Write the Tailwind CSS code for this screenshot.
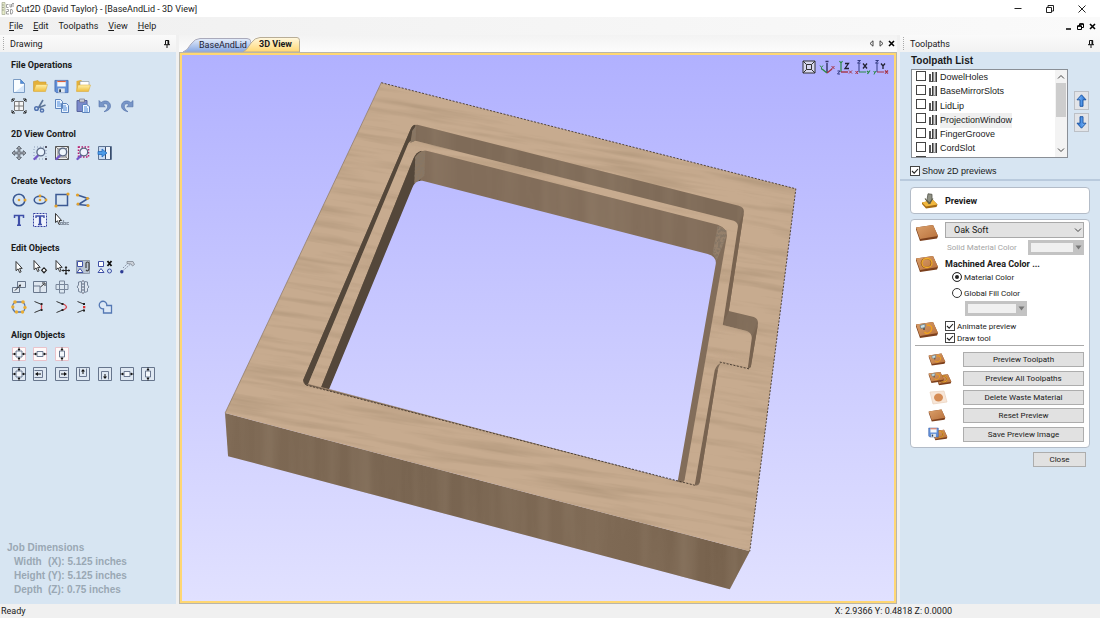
<!DOCTYPE html>
<html lang="en">
<head>
    <meta charset="UTF-8">
    <meta name="viewport" content="width=device-width, initial-scale=1.0">
    <title>Cut2D {David Taylor} - [BaseAndLid - 3D View]</title>
    <script src="https://cdn.jsdelivr.net/npm/@tailwindcss/browser@4"></script>
</head>
<body class="h-screen flex flex-col overflow-hidden bg-[#f0f0f0] text-[#1a1a1a] text-[9px] leading-[12px] [font-family:Roboto,sans-serif]">

    <!-- Shared icon shapes -->
    <svg class="absolute w-0 h-0">
        <defs>
            <linearGradient id="gFolder" x1="0" y1="0" x2="0" y2="1"><stop offset="0" stop-color="#fff0a8"/><stop offset="1" stop-color="#eebc3c"/></linearGradient>
            <linearGradient id="gArrow" x1="0" y1="0" x2="1" y2="0"><stop offset="0" stop-color="#8cc4ff"/><stop offset="1" stop-color="#1d6ad0"/></linearGradient>
            <linearGradient id="gWood" x1="0" y1="0" x2="1" y2="1"><stop offset="0" stop-color="#dba06b"/><stop offset="1" stop-color="#b8713c"/></linearGradient>
            <symbol id="pin" viewBox="0 0 8 8"><path d="M2.5 .5h3.2v4M2.5 .5v4M1 4.7h6M4 5v3" fill="none" stroke="#111"/><path d="M4.5 .5h1.5v4H4.5z" fill="#111"/></symbol>
            <symbol id="lens" viewBox="0 0 16 16"><path d="M6.500 10 2.500 14" stroke="#7457c8" stroke-width="2.4" stroke-linecap="round"/><circle cx="8.8" cy="7" r="3.9" fill="#eef6ff" fill-opacity=".8" stroke="#596783" stroke-width="1.3"/></symbol>
            <symbol id="cursor" viewBox="0 0 16 16"><path d="M5 2.500v9.200l2.100-1.800 1.500 3.600 1.500-.7-1.500-3.400h2.600z" fill="#fff" stroke="#222" stroke-width=".9"/></symbol>
            <symbol id="undo" viewBox="0 0 16 16"><path d="M2 2.500v6.300h6.300L6 6.700c2-1.600 4.600-1 4.700 1.500.1 2-1.200 3.700-3.700 5.500 4-.7 6.700-2.900 6.500-6C13.300 3 7.500 1.400 4.100 4.600z" fill="#7896c8" stroke="#4d6ca5" stroke-width=".6"/></symbol>
            <symbol id="slab" viewBox="0 0 24 18"><path d="M1 3.500 18 1l5 11-1 2.500L5 17 1 5.500z" fill="#7b3f1c"/><path d="M1 3.500 18 1l5 11L5 15z" fill="url(#gWood)"/></symbol>
            <symbol id="ringslab" viewBox="0 0 24 18"><use href="#slab"/><ellipse cx="11.500" cy="8" rx="5" ry="4.500" fill="none" stroke="#8a5018" stroke-width="1.600"/><ellipse cx="12" cy="8" rx="5" ry="4.500" fill="none" stroke="#f0ac2b" stroke-width="1.300"/></symbol>
            <symbol id="toolslab" viewBox="0 0 24 18"><use href="#slab"/><path d="M12 4c4 0 5.500 2 4.500 5s-5 4.500-7 2" fill="none" stroke="#f0a31c" stroke-width="1.300"/><path d="M9 9V5" stroke="#555" stroke-width="1.600"/><path d="M5 4.500l5-1.500v3.500l-4 1z" fill="#cfe0e4" stroke="#587682" stroke-width=".7"/></symbol>
            <symbol id="floppy" viewBox="0 0 16 16"><path d="M1 1.500h14v13H2.500L1 13z" fill="#6290d8" stroke="#3c62a8" stroke-width=".8"/><path d="M3.500 2h9v6h-9z" fill="#f4f8fc"/><path d="M3.500 2h9v1.300h-9z" fill="#e0623c"/><path d="M4.500 10h7v4.500h-7z" fill="#dfe6ee"/><path d="M5.500 11h2v3h-2z" fill="#345"/></symbol>
            <symbol id="bit" viewBox="0 0 8 11"><path d="M0 2h2v7h1v1H0z" fill="#555"/><path d="M3 0h5v10H3z" fill="#8a8a8a"/><path d="M3 0h1v10H3zM7 0h1v10H7z" fill="#3c3c3c"/><path d="M5 0h1v9H5z" fill="#d8d8d8"/></symbol>
            <symbol id="chev" viewBox="0 0 8 6"><path d="M1 1.500 4 4.500l3-3" fill="none" stroke="#444"/></symbol>
            <symbol id="tick" viewBox="0 0 10 10"><path d="M2 5l2.200 2.200L8 3" fill="none" stroke="#222" stroke-width="1.100"/></symbol>
            <symbol id="frame" viewBox="0 0 16 16"><path d="M1.500 1.500h13v13h-13z" fill="#dfe8f2" stroke="#66758c"/></symbol>
            <symbol id="pinkframe" viewBox="0 0 16 16"><path d="M1.500 1.500h13v13h-13z" fill="#fffafa" stroke="#e9c3cb"/></symbol>
            <symbol id="alBoth" viewBox="0 0 16 16"><path d="M5 5h6v6H5z" fill="#f3f7fb" stroke="#6b7890"/><path d="M8 1.500v3M8 11.500v3M1.500 8h3M11.500 8h3" stroke="#111"/><path d="M6.500 3h3L8 4.800zM6.500 13h3L8 11.200zM3 6.500v3L4.800 8zM13 6.500v3L11.200 8z" fill="#111"/></symbol>
            <symbol id="alH" viewBox="0 0 16 16"><path d="M5 5.500h6v5H5z" fill="#f3f7fb" stroke="#6b7890"/><path d="M1.500 8h3M11.500 8h3" stroke="#111"/><path d="M3 6.500v3L4.800 8zM13 6.500v3L11.200 8z" fill="#111"/></symbol>
            <symbol id="alV" viewBox="0 0 16 16"><path d="M5.500 5h5v6h-5z" fill="#f3f7fb" stroke="#6b7890"/><path d="M8 1.500v3M8 11.500v3" stroke="#111"/><path d="M6.500 3h3L8 4.800zM6.500 13h3L8 11.200z" fill="#111"/></symbol>
        </defs>
    </svg>

    <!-- Title bar -->
    <header class="h-[17px] shrink-0 flex items-center bg-white pl-px pr-[14px]">
        <svg class="size-[13px]" viewBox="0 0 13 13"><path d="M1 .5h3v12H1z" fill="#e6ebc9" stroke="#a5ab91" stroke-width=".7"/><path d="M1 3h2M1 5.500h2M1 8h2" stroke="#777" stroke-width=".6"/><path d="M7.500 2.500h-2v3h2M9 2v3h1.500V2M11 1.500h2M12 1.500V5M5.500 7.500h2v2h-2v2.500h2.500M9.500 7.500h1.500q1.500 2-.1 4.500H9.500z" fill="none" stroke="#8a8a8a" stroke-width=".8"/></svg>
        <h1 class="ml-0.5">Cut2D {David Taylor} - [BaseAndLid - 3D View]</h1>
        <div class="ml-auto flex items-center gap-6">
            <button aria-label="Minimize"><svg class="size-[8px]" viewBox="0 0 8 8"><path d="M.5 3.500h7" stroke="#222"/></svg></button>
            <button aria-label="Restore"><svg class="size-[8px]" viewBox="0 0 8 8"><path d="M.5 2.500h5v5h-5zM2 2.500v-2h5.500V6H6" fill="none" stroke="#222"/></svg></button>
            <button aria-label="Close window"><svg class="size-[8px]" viewBox="0 0 8 8"><path d="M.5.5l7 7M7.500.5l-7 7" stroke="#222"/></svg></button>
        </div>
    </header>

    <!-- Menu bar -->
    <nav class="h-[18px] shrink-0 flex items-center bg-linear-to-r from-[#f0f0f0] to-[#fafafa] pl-[9px] pr-1">
        <div class="flex gap-2.5">
            <button><u>F</u>ile</button>
            <button><u>E</u>dit</button>
            <button>Toolpaths</button>
            <button><u>V</u>iew</button>
            <button><u>H</u>elp</button>
        </div>
        <div class="ml-auto flex items-center gap-[5px]">
            <button aria-label="Minimize view"><svg class="size-[7px]" viewBox="0 0 7 7"><path d="M1 6h5" stroke="#000" stroke-width="1.500"/></svg></button>
            <button aria-label="Restore view"><svg class="size-[7px]" viewBox="0 0 7 7"><path d="M.5 3h4v3.500h-4zM2.500 3V1h4v3.500h-2" fill="none" stroke="#000"/><path d="M.5 3h4M2.500 1h4" stroke="#000" stroke-width="1.500"/></svg></button>
            <button aria-label="Close view"><svg class="size-[7px]" viewBox="0 0 7 7"><path d="M1 1l5 5M6 1L1 6" stroke="#000" stroke-width="1.600"/></svg></button>
        </div>
    </nav>

    <main class="flex-1 min-h-0 flex gap-[3px]">

        <!-- Drawing panel -->
        <aside class="w-[176px] shrink-0 flex flex-col">
            <div class="h-[17px] shrink-0 flex items-center bg-linear-to-b from-[#fafafa] to-[#f2f2f2] pl-[3px] pr-[5px]">
                <span class="h-[13px] border-l border-dotted border-[#aaa]"></span>
                <h2 class="ml-1.5">Drawing</h2>
                <button class="ml-auto" aria-label="Pin drawing panel"><svg class="size-[8px]"><use href="#pin"/></svg></button>
            </div>
            <div class="flex-1 min-h-0 flex flex-col gap-[9px] bg-[#d7e5f2] pt-1 pb-[7px]">
                <section>
                    <h3 class="h-[18px] mb-0.5 pl-[11px] leading-[18px] font-bold">File Operations</h3>
                    <div class="ml-2 w-[151px] grid grid-cols-7 auto-rows-[20px] place-items-center">
                        <button aria-label="New"><svg class="size-[16px]" viewBox="0 0 16 16"><path d="M2.500 1.500h7l4 4v9h-11z" fill="#fafdff" stroke="#7b9cc4"/><path d="M9.500 1.500v4h4z" fill="#4f8ede" stroke="#5481bd" stroke-width=".6"/><path d="M4 14l9-7v7z" fill="#d6e7fa"/></svg></button>
                        <button aria-label="Open"><svg class="size-[16px]" viewBox="0 0 16 16"><path d="M1.500 13V3.500L6 2.500l1.500 1.500H14v3" fill="#e4b13a" stroke="#c99a32" stroke-width=".6"/><path d="M1.500 13.500 4 6.500h11.500l-2 7z" fill="url(#gFolder)" stroke="#d8a42e" stroke-width=".5"/></svg></button>
                        <button aria-label="Save"><svg class="size-[15px]"><use href="#floppy"/></svg></button>
                        <button aria-label="Import"><svg class="size-[16px]" viewBox="0 0 16 16"><path d="M1.500 13V3L6 2l1.500 1.500H14v3" fill="#e4b13a"/><path d="M5 3.500h9v5H5z" fill="#fff" stroke="#8296ad" stroke-width=".6"/><path d="M1.500 13.500 3 7h12.500l-2 6.500z" fill="url(#gFolder)" stroke="#d8a42e" stroke-width=".5"/></svg></button>
                        <button class="col-start-1" aria-label="Job size"><svg class="size-[16px]" viewBox="0 0 16 16"><path d="M3.500 3.500h9v9h-9zM8 3.500v9M3.500 8h9" fill="#f5f5f5" stroke="#777"/><path d="M1 4V1h3M12 1h3v3M15 12v3h-3M4 15H1v-3" fill="none" stroke="#222"/><path d="M1 1l2 2M15 1l-2 2M1 15l2-2M15 15l-2-2" stroke="#222"/></svg></button>
                        <button aria-label="Cut"><svg class="size-[16px]" viewBox="0 0 16 16"><path d="M11 2 6 10.500M13.500 7 6 10" stroke="#5d7598" stroke-width="1.600"/><circle cx="4.500" cy="10.500" r="1.800" fill="none" stroke="#5273b0" stroke-width="1.500"/><circle cx="10" cy="12.500" r="1.600" fill="none" stroke="#5273b0" stroke-width="1.500"/><path d="M9 11 7.500 7" stroke="#5d7598"/></svg></button>
                        <button aria-label="Copy"><svg class="size-[16px]" viewBox="0 0 16 16"><path d="M1.500 1.500h5l2 2v7h-7zM7.500 5.500h5l2 2v7h-7z" fill="#e9f2fd" stroke="#5c84bd"/><path d="M3 4h3M3 6h4M3 8h4M9 8h3M9 10h4M9 12h4" stroke="#4f8bda"/></svg></button>
                        <button aria-label="Paste"><svg class="size-[16px]" viewBox="0 0 16 16"><path d="M2 2.500h10v11H2z" fill="#7b89cb" stroke="#59649d"/><path d="M4.500 1h5v3h-5z" fill="#c9cdd8" stroke="#667" stroke-width=".6"/><path d="M7.500 6.500h4l3 2v6h-7z" fill="#f1f7ff" stroke="#5c84bd"/><path d="M9 9h3M9 11h4M9 13h4" stroke="#4f8bda"/></svg></button>
                        <button aria-label="Undo"><svg class="size-[16px]"><use href="#undo"/></svg></button>
                        <button aria-label="Redo"><svg class="size-[16px] -scale-x-100"><use href="#undo"/></svg></button>
                    </div>
                </section>
                <section>
                    <h3 class="h-[18px] pl-[11px] leading-[18px] font-bold">2D View Control</h3>
                    <div class="ml-2 w-[151px] grid grid-cols-7 auto-rows-[20px] place-items-center">
                        <button aria-label="Pan"><svg class="size-[14px]" viewBox="0 0 16 16"><path d="M8 0l2.800 3H9v4h4V5.200L16 8l-3 2.800V9H9v4h1.800L8 16l-2.800-3H7V9H3v1.800L0 8l3-2.800V7h4V3H5.200z" fill="#a4a9b1" stroke="#454d58" stroke-width=".8"/></svg></button>
                        <button aria-label="Zoom"><svg class="size-[16px]" viewBox="0 0 16 16"><path d="M2 2h12v12H2z" fill="none" stroke="#8899b5" stroke-dasharray="1 2"/><path d="M13 13h2v2h-2zM13 1h2v2h-2z" fill="#556"/><use href="#lens"/></svg></button>
                        <button aria-label="Zoom to job"><svg class="size-[16px]" viewBox="0 0 16 16"><path d="M1.500 1.500h13v13h-13z" fill="#eee" stroke="#555"/><path d="M4 4h8v8H4zM1.500 1.500 4 4M14.500 1.500 12 4M14.500 14.500 12 12" fill="#fafafa" stroke="#666" stroke-width=".8"/><use href="#lens"/></svg></button>
                        <button aria-label="Zoom to selection"><svg class="size-[16px]" viewBox="0 0 16 16"><path d="M3.500 2h10v10h-10z" fill="#f7e6f4" stroke="#b51a6e" stroke-width="1.500" stroke-dasharray="1.500 1.500"/><use href="#lens"/></svg></button>
                        <button aria-label="Toggle view"><svg class="size-[16px]" viewBox="0 0 16 16"><path d="M1.500 1.500h13v13h-13z" fill="#c9dcf4" stroke="#5f7493"/><path d="M9 2h4v12H9z" fill="#eff3fa"/><path d="M13.500 2v12.500M8.500 2v12" stroke="#384c6b"/><path d="M1 6.500h4V4l5 4-5 4V9.500H1z" fill="#4d9be8" stroke="#1c63b4" stroke-width=".7"/></svg></button>
                    </div>
                </section>
                <section>
                    <h3 class="h-[18px] pl-[11px] leading-[18px] font-bold">Create Vectors</h3>
                    <div class="ml-2 w-[151px] grid grid-cols-7 auto-rows-[20px] place-items-center">
                        <button aria-label="Circle"><svg class="size-[16px]" viewBox="0 0 16 16"><circle cx="8" cy="8" r="5.800" fill="none" stroke="#3b5993" stroke-width="1.500"/><circle cx="8" cy="8" r="1.300" fill="#e3a12b"/><circle cx="14" cy="8" r="1.500" fill="#e3a12b"/></svg></button>
                        <button aria-label="Ellipse"><svg class="size-[16px]" viewBox="0 0 16 16"><ellipse cx="8" cy="8" rx="5.800" ry="3.800" fill="none" stroke="#3b5993" stroke-width="1.500"/><circle cx="8" cy="8" r="1.300" fill="#e3a12b"/><circle cx="8" cy="4" r="1.400" fill="#e3a12b"/><circle cx="14" cy="8" r="1.400" fill="#e3a12b"/></svg></button>
                        <button aria-label="Rectangle"><svg class="size-[16px]" viewBox="0 0 16 16"><path d="M2 2.500h11.500v11H2z" fill="none" stroke="#3b5993" stroke-width="1.500"/><circle cx="14" cy="2" r="1.600" fill="#e3a12b"/><circle cx="2" cy="14" r="1.600" fill="#e3a12b"/></svg></button>
                        <button aria-label="Polyline"><svg class="size-[16px]" viewBox="0 0 16 16"><path d="M2.500 3 13 6.500 3.500 12.500l9.500 1" fill="none" stroke="#3b5993" stroke-width="1.600"/><circle cx="2.500" cy="3" r="1.600" fill="#e3a12b"/><circle cx="12.500" cy="6.500" r="1.400" fill="#e3a12b"/><circle cx="3" cy="12" r="1.500" fill="#e3a12b"/><circle cx="13" cy="13.500" r="1.600" fill="#e3a12b"/></svg></button>
                        <button class="col-start-1" aria-label="Text"><svg class="size-[14px]" viewBox="0 0 14 14"><path d="M2.500 5V2.500h9V5M7 2.500V12M5 12.200h4" fill="none" stroke="#3f4fa8" stroke-width="1.500"/><path d="M7 2.500V12" stroke="#3f4fa8" stroke-width="2.200"/></svg></button>
                        <button aria-label="Text in box"><svg class="size-[16px]" viewBox="0 0 16 16"><path d="M1.500 1.500h13v13h-13z" fill="#eef2fc" stroke="#3440a0" stroke-dasharray="2 1"/><path d="M4 6V4h8v2M6 12.500h4" fill="none" stroke="#3f4fa8" stroke-width="1.400"/><path d="M8 4v8.500" stroke="#3f4fa8" stroke-width="2.200"/></svg></button>
                        <button aria-label="Edit text"><svg class="size-[16px]" viewBox="0 0 16 16"><path d="M1.500 1.500v9l2-1.700L5 12.500l1.500-.7-1.400-3.300h2.500z" fill="#fff" stroke="#222" stroke-width=".9"/><path d="M6.500 12.500v-2h2v2zM9.500 8v4.500h2v-2h-2M15 10.500h-2v2h2" fill="none" stroke="#8b97a6" stroke-width="1.200"/></svg></button>
                    </div>
                </section>
                <section>
                    <h3 class="h-[18px] pl-[11px] leading-[18px] font-bold">Edit Objects</h3>
                    <div class="ml-2 w-[151px] grid grid-cols-7 auto-rows-[20px] place-items-center">
                        <button aria-label="Select"><svg class="size-[16px]"><use href="#cursor"/></svg></button>
                        <button aria-label="Node edit"><svg class="size-[16px]" viewBox="0 0 16 16"><use href="#cursor" x="-3" y="-1"/><path d="M12 8l3.200 3.300-3.200 3.400-3.200-3.400z" fill="#222"/><circle cx="12" cy="11.300" r="1.200" fill="#fff"/></svg></button>
                        <button aria-label="Transform"><svg class="size-[16px]" viewBox="0 0 16 16"><use href="#cursor" x="-3" y="-1"/><path d="M12 7.500v8M8 11.500h8" stroke="#222" stroke-width="1.200"/><path d="M10.500 9h3L12 7.300zM10.500 14h3L12 15.700zM9.500 10v3L7.800 11.500zM14.500 10v3l1.700-1.500z" fill="#222"/></svg></button>
                        <button aria-label="Group"><svg class="size-[16px]" viewBox="0 0 16 16"><path d="M1.500 1.500h13v13h-13z" fill="#b9c5d4" stroke="#7b8798" stroke-width=".7"/><path d="M2.500 2.500h5v5h-5zM5 9.500l3 4H2z" fill="#fff" stroke="#3f51a6"/><path d="M11 9V4q1.500-2 3 0v6q-1 3-3 1" fill="none" stroke="#444" stroke-width="1.200"/></svg></button>
                        <button aria-label="Ungroup"><svg class="size-[16px]" viewBox="0 0 16 16"><path d="M1.500 2.500h5v5h-5zM4 9.500l3 4H1z" fill="#fff" stroke="#3f51a6"/><circle cx="12.500" cy="12" r="2" fill="none" stroke="#3f51a6"/><path d="M10.500 2l4 5M14.500 2l-4 5" stroke="#111" stroke-width="1.800"/></svg></button>
                        <button aria-label="Measure"><svg class="size-[16px]" viewBox="0 0 16 16"><path d="M2.500 13 11 5.500M4 9l6-6" stroke="#8a93a8" stroke-dasharray="1.500 1"/><path d="M8 2.500h6l1.500 3-2 1.500L12 5 8 4.500z" fill="#cbd1d9" stroke="#808894" stroke-width=".8"/><circle cx="2.800" cy="12.800" r="1.700" fill="#2c3b94"/></svg></button>
                        <button class="col-start-1" aria-label="Move"><svg class="size-[16px]" viewBox="0 0 16 16"><path d="M6.500 2.500h8v6h-8zM1.500 8.500h7v5h-7z" fill="#dfe7f0" stroke="#68778c"/><path d="M4 11.500 9 6.500" stroke="#222"/><path d="M10 5.500 9.500 8 7.500 6z" fill="#222"/></svg></button>
                        <button aria-label="Scale"><svg class="size-[16px]" viewBox="0 0 16 16"><path d="M1.500 2.500h13v11h-13zM1.500 7h6.500v6.500" fill="#dfe7f0" stroke="#68778c"/><path d="M8.500 8 12 5M10 4h3v3" fill="none" stroke="#333"/></svg></button>
                        <button aria-label="Rotate"><svg class="size-[16px]" viewBox="0 0 16 16"><path d="M2 5.500h12v5H2zM5.500 2h5v12h-5z" fill="#dfe7f0" fill-opacity=".6" stroke="#78869a"/></svg></button>
                        <button aria-label="Mirror"><svg class="size-[16px]" viewBox="0 0 16 16"><path d="M6.500 2.500v11l-3-1v-3l-1.500-1.500 1.500-2v-3zM9.500 2.500v11l3-1v-3L14 8l-1.500-2v-3z" fill="#dfe7f0" stroke="#78869a"/><path d="M8 1v14" stroke="#667" stroke-dasharray="2 1"/></svg></button>
                        <button class="col-start-1" aria-label="Fit curves"><svg class="size-[16px]" viewBox="0 0 16 16"><path d="M4 3h8q2 2 2 5t-2 5H4q-2.500-2-2.500-5T4 3z" fill="none" stroke="#5673a8" stroke-width="1.300"/><g fill="#e9ad36"><circle cx="4" cy="3" r="1.800"/><circle cx="12" cy="3" r="1.800"/><circle cx="14" cy="8.500" r="1.700"/><circle cx="1.800" cy="8" r="1.700"/><circle cx="5.500" cy="13" r="1.700"/><circle cx="11.500" cy="13" r="1.700"/></g></svg></button>
                        <button aria-label="Join with line"><svg class="size-[16px]" viewBox="0 0 16 16"><path d="M2.500 2.500 8.500 5M2.500 13.500l6-2.500" stroke="#333"/><path d="M9.500 5v6" stroke="#d44b53" stroke-width="1.300"/><path d="M8.500 4h2v2h-2zM8.500 10h2v2h-2z" fill="#222"/></svg></button>
                        <button aria-label="Join with curve"><svg class="size-[16px]" viewBox="0 0 16 16"><path d="M2.500 2.500 8.500 5M2.500 13.500l6-2.500" stroke="#333"/><path d="M9 5q7 3 0 6" fill="none" stroke="#d44b53" stroke-width="1.300"/><path d="M7.500 4h2v2h-2zM7.500 10h2v2h-2z" fill="#222"/></svg></button>
                        <button aria-label="Join at point"><svg class="size-[16px]" viewBox="0 0 16 16"><path d="M2.500 2.500 8.500 5M2.500 13.500l6-2.500" stroke="#333"/><path d="M8 4h2v2H8zM8 10.500h2v2H8z" fill="#222"/><path d="M8 7h2.300v2.300H8z" fill="#d33"/></svg></button>
                        <button aria-label="Weld"><svg class="size-[16px]" viewBox="0 0 16 16"><path d="M6.500 9.800A3.800 3.800 0 1 1 9.800 6.500h4.700v7.500H6.500z" fill="#dce8f6" stroke="#5478b4" stroke-width="1.300"/></svg></button>
                    </div>
                </section>
                <section>
                    <h3 class="h-[18px] pl-[11px] leading-[18px] font-bold">Align Objects</h3>
                    <div class="ml-2 w-[151px] grid grid-cols-7 auto-rows-[20px] place-items-center">
                        <button aria-label="Center in material"><svg class="size-[16px]"><use href="#pinkframe"/><use href="#alBoth"/></svg></button>
                        <button aria-label="Center horizontally in material"><svg class="size-[16px]"><use href="#pinkframe"/><use href="#alH"/></svg></button>
                        <button aria-label="Center vertically in material"><svg class="size-[16px]"><use href="#pinkframe"/><use href="#alV"/></svg></button>
                        <button class="col-start-1" aria-label="Align centers"><svg class="size-[16px]"><use href="#frame"/><use href="#alBoth"/></svg></button>
                        <button aria-label="Align left"><svg class="size-[16px]" viewBox="0 0 16 16"><use href="#frame"/><path d="M2.500 4.500h8v7h-8" fill="none" stroke="#6b7890"/><path d="M5 8h4" stroke="#111"/><path d="M6 6v4L3 8z" fill="#111"/></svg></button>
                        <button aria-label="Align right"><svg class="size-[16px]" viewBox="0 0 16 16"><use href="#frame"/><path d="M13.500 4.500h-8v7h8" fill="none" stroke="#6b7890"/><path d="M7 8h4" stroke="#111"/><path d="M10 6v4l3-2z" fill="#111"/></svg></button>
                        <button aria-label="Align top"><svg class="size-[16px]" viewBox="0 0 16 16"><use href="#frame"/><path d="M4.500 2.500v8h7v-8" fill="none" stroke="#6b7890"/><path d="M8 5v3" stroke="#111"/><path d="M6 5.500h4L8 3z" fill="#111"/></svg></button>
                        <button aria-label="Align bottom"><svg class="size-[16px]" viewBox="0 0 16 16"><use href="#frame"/><path d="M4.500 13.500v-8h7v8" fill="none" stroke="#6b7890"/><path d="M8 8v3" stroke="#111"/><path d="M6 10.500h4L8 13z" fill="#111"/></svg></button>
                        <button aria-label="Align horizontal centers"><svg class="size-[16px]"><use href="#frame"/><use href="#alH"/></svg></button>
                        <button aria-label="Align vertical centers"><svg class="size-[16px]"><use href="#frame"/><use href="#alV"/></svg></button>
                    </div>
                </section>
                <div class="mt-auto pl-[7px] text-[10px] leading-[14px] font-bold text-[#9aa8b4] [font-family:Liberation_Sans,sans-serif]">
                    <p>Job Dimensions</p>
                    <dl class="ml-[7px] grid grid-cols-[34px_1fr]">
                        <dt>Width</dt><dd>(X): 5.125 inches</dd>
                        <dt>Height</dt><dd>(Y): 5.125 inches</dd>
                        <dt>Depth</dt><dd>(Z): 0.75 inches</dd>
                    </dl>
                </div>
            </div>
        </aside>

        <!-- 3D view -->
        <section class="flex-1 min-w-0 flex flex-col">
            <div class="h-[17px] shrink-0 flex items-end bg-linear-to-b from-[#f3f3f3] to-[#fcfcfc] pl-1 pr-0.5">
                <button class="relative h-[14px] w-[68px] pl-4 text-left leading-[14px] text-[#223]">
                    <svg class="absolute inset-0 w-full h-full" viewBox="0 0 68 14" preserveAspectRatio="none"><defs><linearGradient id="gTab" x1="0" y1="0" x2="0" y2="1"><stop offset="0" stop-color="#e6eefb"/><stop offset="1" stop-color="#86a6e2"/></linearGradient></defs><path d="M0 14Q4 13 8 6Q12 .5 17 .5H64q4 0 4 4V14z" fill="url(#gTab)" stroke="#aab"/></svg>
                    <span class="relative">BaseAndLid</span>
                </button>
                <button class="relative -ml-2 h-[15px] w-[57px] pl-4 text-left leading-[15px] font-bold">
                    <svg class="absolute inset-0 w-full h-full" viewBox="0 0 57 15" preserveAspectRatio="none"><defs><linearGradient id="gTabOn" x1="0" y1="0" x2="0" y2="1"><stop offset="0" stop-color="#fff8e0"/><stop offset="1" stop-color="#ffd772"/></linearGradient></defs><path d="M0 15Q4 13 8 6Q12 .5 17 .5H54q2.500 0 2.500 3V15z" fill="url(#gTabOn)" stroke="#b8ad96"/></svg>
                    <span class="relative">3D View</span>
                </button>
                <div class="ml-auto self-center flex items-center gap-[3px]">
                    <button aria-label="Previous tab"><svg class="size-[7px]" viewBox="0 0 7 7"><path d="M5 .8v5.400L2 3.500z" fill="none" stroke="#333" stroke-width=".9"/></svg></button>
                    <button aria-label="Next tab"><svg class="size-[7px]" viewBox="0 0 7 7"><path d="M2 .8v5.400l3-2.700z" fill="none" stroke="#333" stroke-width=".9"/></svg></button>
                    <button aria-label="Close tab"><svg class="size-[7px]" viewBox="0 0 7 7"><path d="M1 1l5 5M6 1L1 6" stroke="#000" stroke-width="1.600"/></svg></button>
                </div>
            </div>
            <div class="relative flex-1 min-h-0 border border-[#b9b6ab]">
                <div class="h-full border-2 border-[#ffd772]">
                    <svg class="block w-full h-full" viewBox="182 55 711 546" preserveAspectRatio="xMidYMid slice">
                        <defs>
                            <linearGradient id="sky" gradientUnits="userSpaceOnUse" x1="0" y1="55" x2="0" y2="602"><stop offset="0" stop-color="#b1b1ff"/><stop offset="1" stop-color="#e1e1ff"/></linearGradient>
                            <linearGradient id="front" gradientUnits="userSpaceOnUse" x1="225" y1="0" x2="749" y2="0"><stop offset="0" stop-color="#7e6954"/><stop offset=".4" stop-color="#786450"/><stop offset=".7" stop-color="#7f6a55"/><stop offset="1" stop-color="#75604b"/></linearGradient>
                            <filter id="grain" x="0" y="0" width="1" height="1"><feTurbulence type="fractalNoise" baseFrequency=".009 .14" numOctaves="4" seed="8"/><feColorMatrix values="0 0 0 0 .44  0 0 0 0 .31  0 0 0 0 .2  1.900 0 0 0 -.82"/></filter>
                            <filter id="bands" x="0" y="0" width="1" height="1"><feTurbulence type="fractalNoise" baseFrequency=".04 .002" numOctaves="3" seed="3"/><feColorMatrix values="0 0 0 0 .3  0 0 0 0 .22  0 0 0 0 .15  1.100 0 0 0 -.45"/></filter>
                            <filter id="speck" x="0" y="0" width="1" height="1"><feTurbulence type="fractalNoise" baseFrequency=".4" numOctaves="2" seed="5"/><feColorMatrix values="0 0 0 0 .24  0 0 0 0 .18  0 0 0 0 .13  6 0 0 0 -2.500"/></filter>
                            <path id="face" d="M381 83 795 189 749 551 225 413z"/>
                            <path id="pocket" d="M303 380 410 130Q412 125 417 125L738 206Q744 208 743 213L728 311 753 317Q758 319 757 325L750 367Q749 369 746 368L722 362Q719 362 717 370L699 482Q698 486 694 485L306 385Q302 383 303 380z"/>
                            <path id="ledge" d="M308 384 407 146Q409 140 415 141L733 221Q738 223 737 228L722 325 746 331Q751 333 751 338L747 368 722 362Q716 364 714 370L694 485z"/>
                            <path id="hole" d="M321 387 413 159Q417 150 426 151L717 225Q727 229 726 237L684 479Q683 483 679 482z"/>
                            <clipPath id="cFace"><use href="#face"/></clipPath>
                            <clipPath id="cLedge"><use href="#ledge"/></clipPath>
                            <clipPath id="cWall"><path d="M417 125 742 207 738 222 412 141zM426 151 720 226 715 262 413 184zM225 413 749 551 729 589 228 456zM727 310 757 319 751 334 721 325z"/></clipPath>
                            <clipPath id="cSpeck"><path d="M415 157 425 151 424 176 414 184zM412 131 416 126 415 141 410 143zM717 226 726 231 725 238 716 260 712 253z"/></clipPath>
                        </defs>
                        <path d="M100-100H1000V800H100z" fill="url(#sky)"/>
                        <path d="M225 413 749 551 729 589 228 456z" fill="url(#front)"/>
                        <use href="#face" fill="#c7ab8f"/>
                        <g clip-path="url(#cFace)"><rect x="150" y="-20" width="800" height="700" transform="rotate(9 500 330)" filter="url(#grain)"/></g>
                        <use href="#pocket" fill="#7f6b58"/>
                        <path d="M303 380 410 130Q412 125 415 125L412 141 308 384 305 385z" fill="#54473a"/>
                        <path d="M743 213 728 311 722 325 737 228zM757 325 750 367 747 368 751 338zM717 370 699 482 694 485 714 370z" fill="#786350"/>
                        <use href="#ledge" fill="#c7ab8f"/>
                        <g clip-path="url(#cLedge)"><rect x="150" y="-20" width="800" height="700" transform="rotate(9 500 330)" filter="url(#grain)" opacity=".8"/></g>
                        <use href="#hole" fill="#826d5a"/>
                        <path d="M321 387 413 159Q416 152 421 151L420 181 329 389z" fill="#54473a"/>
                        <g clip-path="url(#cWall)"><rect x="200" y="80" width="600" height="520" filter="url(#bands)"/></g>
                        <path d="M415 157Q419 151 425 151L424 176 418 181 414 184zM412 131 416 126 415 141 410 143z" fill="#8a7661"/>
                        <path d="M717 226Q727 229 725 238L716 260 712 253z" fill="#95806b"/>
                        <g clip-path="url(#cSpeck)"><rect x="400" y="120" width="340" height="150" filter="url(#speck)"/></g>
                        <path d="M329 389 412 188Q415 180 422 181L707 254Q716 257 715 264L677 481z" fill="url(#sky)"/>
                        <path d="M381 83 795 189 749 551M306 385 694 485M719 362 749 369" fill="none" stroke="#44382d" stroke-width=".9" stroke-dasharray="2 1.500"/>
                        <path d="M381 83 225 413" stroke="#8d7862" stroke-width=".7"/>
                    </svg>
                </div>
                <div class="absolute top-[6px] right-[7px] flex gap-0.5">
                    <button aria-label="Fit view"><svg class="size-[16px]" viewBox="0 0 16 16"><path d="M2 2h12v12H2zM5.500 5.500h5v5h-5zM2 2l3.500 3.500M14 2l-3.500 3.500M2 14l3.500-3.500M14 14l-3.500-3.500" fill="#d7d7ee" stroke="#333"/></svg></button>
                    <button aria-label="Isometric view"><svg class="size-[16px]" viewBox="0 0 16 16"><path d="M8 4v10M6.500 2.500h3" stroke="#336" stroke-width="1.400"/><path d="M8 14 3 10" stroke="#2b8a45" stroke-width="1.400"/><path d="M8 14l5-4" stroke="#a63344" stroke-width="1.400"/><path d="M1 6.500l1.500 2L4 6.500M2.500 8.500v2" fill="none" stroke="#2b8a45"/><path d="M12.500 7l3 3M15.500 7l-3 3" stroke="#a63344"/></svg></button>
                    <button aria-label="View along Z"><svg class="size-[16px]" viewBox="0 0 16 16"><path d="M4 13V3M2.500 2 4 4l1.500-2" fill="none" stroke="#2b8a45" stroke-width="1.200"/><path d="M4 13h7" stroke="#a63344" stroke-width="1.400"/><path d="M12 11.500l3 3M15 11.500l-3 3" stroke="#a63344"/><path d="M.5 12H3l-2.500 3H3" fill="none" stroke="#333a80"/><path d="M8 4.500h3.500L8 9.500h4" fill="none" stroke="#223" stroke-width="1.300"/></svg></button>
                    <button aria-label="View along X"><svg class="size-[16px]" viewBox="0 0 16 16"><path d="M4 13V4M2.500 1.500h3l-3 2.500h3" fill="none" stroke="#333a80"/><path d="M4 13h7M12 12l1.500 1.500L15 11.500M13.500 13l-1 2" fill="none" stroke="#2b8a45" stroke-width="1.200"/><path d="M.5 12l2.500 3M3 12 .5 15" stroke="#a63344"/><path d="M8 4.500l4 5M12 4.500l-4 5" stroke="#223" stroke-width="1.300"/></svg></button>
                    <button aria-label="View along Y"><svg class="size-[16px]" viewBox="0 0 16 16"><path d="M4 13V4M2.500 1.500h3l-3 2.500h3" fill="none" stroke="#333a80"/><path d="M4 13h7M12 11.500l3 3M15 11.500l-3 3" stroke="#a63344" stroke-width="1.200"/><path d="M.5 12l1.500 1.500L3 12M2 13l-1 2.500" fill="none" stroke="#2b8a45"/><path d="M8 4.500l2 2.500 2-2.500M10 7v3" fill="none" stroke="#223" stroke-width="1.300"/></svg></button>
                </div>
            </div>
        </section>

        <!-- Toolpaths panel -->
        <aside class="w-[200px] shrink-0 flex flex-col">
            <div class="h-[17px] shrink-0 flex items-center bg-linear-to-b from-[#fafafa] to-[#f2f2f2] pl-[3px] pr-[5px]">
                <span class="h-[13px] border-l border-dotted border-[#aaa]"></span>
                <h2 class="ml-1.5">Toolpaths</h2>
                <button class="ml-auto" aria-label="Pin toolpaths panel"><svg class="size-[8px]"><use href="#pin"/></svg></button>
            </div>
            <div class="flex-1 min-h-0 bg-[#d7e5f2]">
                <div class="h-[129px] border-b-2 border-[#b9cadd] pl-[11px] pr-[11px] pt-[2px] [font-family:Liberation_Sans,sans-serif]">
                    <h3 class="h-[15px] text-[10px] leading-[13px] font-bold">Toolpath List</h3>
                    <div class="flex items-center gap-[6px]">
                        <div class="flex-1 h-[89px] flex border border-[#8a8f96] bg-white overflow-hidden">
                            <ul class="flex-1 h-[100px] grid grid-rows-7 pl-1">
                                <li><label class="flex items-center gap-[3px] leading-[15px]"><input type="checkbox" class="appearance-none size-[10px] mb-1 border border-[#444] bg-white"><svg class="w-[8px] h-[11px]"><use href="#bit"/></svg><span>DowelHoles</span></label></li>
                                <li><label class="flex items-center gap-[3px] leading-[15px]"><input type="checkbox" class="appearance-none size-[10px] mb-1 border border-[#444] bg-white"><svg class="w-[8px] h-[11px]"><use href="#bit"/></svg><span>BaseMirrorSlots</span></label></li>
                                <li><label class="flex items-center gap-[3px] leading-[15px]"><input type="checkbox" class="appearance-none size-[10px] mb-1 border border-[#444] bg-white"><svg class="w-[8px] h-[11px]"><use href="#bit"/></svg><span>LidLip</span></label></li>
                                <li><label class="flex items-center gap-[3px] leading-[15px]"><input type="checkbox" class="appearance-none size-[10px] mb-1 border border-[#444] bg-white"><svg class="w-[8px] h-[11px]"><use href="#bit"/></svg><span class="bg-[#efefef]">ProjectionWindow</span></label></li>
                                <li><label class="flex items-center gap-[3px] leading-[15px]"><input type="checkbox" class="appearance-none size-[10px] mb-1 border border-[#444] bg-white"><svg class="w-[8px] h-[11px]"><use href="#bit"/></svg><span>FingerGroove</span></label></li>
                                <li><label class="flex items-center gap-[3px] leading-[15px]"><input type="checkbox" class="appearance-none size-[10px] mb-1 border border-[#444] bg-white"><svg class="w-[8px] h-[11px]"><use href="#bit"/></svg><span>CordSlot</span></label></li>
                                <li><input type="checkbox" aria-label="Next toolpath" class="block appearance-none size-[10px] border border-[#444] bg-white"></li>
                            </ul>
                            <div class="w-[12px] flex flex-col items-center bg-[#f3f3f3] py-1">
                                <svg class="w-[8px] h-[6px] rotate-180 shrink-0"><use href="#chev"/></svg>
                                <div class="mt-[3px] w-[10px] h-[34px] bg-[#cdcdcd]"></div>
                                <svg class="mt-auto w-[8px] h-[6px] shrink-0"><use href="#chev"/></svg>
                            </div>
                        </div>
                        <div class="flex flex-col gap-[3px] pb-1">
                            <button class="w-[15px] h-[19px] grid place-items-center border border-[#bcc0c6] bg-[#e2e4e8]" aria-label="Move up"><svg class="w-[11px] h-[13px]" viewBox="0 0 11 13"><path d="M5.500.8l4.500 5H7v6.500H4V5.800H1z" fill="url(#gArrow)" stroke="#154f9e" stroke-width=".9"/></svg></button>
                            <button class="w-[15px] h-[19px] grid place-items-center border border-[#bcc0c6] bg-[#e2e4e8]" aria-label="Move down"><svg class="w-[11px] h-[13px] rotate-180" viewBox="0 0 11 13"><path d="M5.500.8l4.500 5H7v6.500H4V5.800H1z" fill="url(#gArrow)" stroke="#154f9e" stroke-width=".9"/></svg></button>
                        </div>
                    </div>
                    <label class="mt-1.5 -ml-px h-[14px] flex items-center gap-0.5">
                        <span class="grid"><input type="checkbox" checked class="col-start-1 row-start-1 appearance-none size-[10px] border border-[#444] bg-white"><svg class="col-start-1 row-start-1 size-[10px] pointer-events-none"><use href="#tick"/></svg></span>
                        Show 2D previews
                    </label>
                </div>

                <div class="px-[10px] pt-1.5">
                    <div class="h-[27px] flex items-center rounded-sm border border-[#b3bcc8] bg-white pl-2.5">
                        <svg class="w-[18px] h-[16px]" viewBox="0 0 18 16"><path d="M1 9.500 12 7l4.500 4.500-1 2.500L5 15.500 1 11z" fill="#a46a14"/><path d="M1 9.500 12 7l4.500 4.500L5 13.500z" fill="#f1b83e"/><path d="M7 .8l4 .5v5l-2 4.500-3-4z" fill="#8f9184" stroke="#55574c" stroke-width=".8"/><path d="M4 5.500l4 5 4-5" fill="none" stroke="#5b5a42" stroke-width="1.200"/></svg>
                        <h3 class="ml-1.5 font-bold">Preview</h3>
                    </div>

                    <form class="mt-[5px] rounded-sm border border-[#b3bcc8] bg-white pl-1 pr-[5px] pt-[2px] pb-[5px] text-[8px] leading-[11px]">
                        <div class="grid grid-cols-[24px_1fr] gap-x-1.5">
                            <svg class="w-[24px] h-[18px] mt-0.5"><use href="#slab"/></svg>
                            <div>
                                <div class="grid items-center">
                                    <select aria-label="Material" class="col-start-1 row-start-1 appearance-none h-[16px] w-full border border-[#a9a9a9] bg-[#e2e2e2] pl-2 text-[9px] leading-[12px]"><option>Oak Soft</option></select>
                                    <svg class="col-start-1 row-start-1 justify-self-end mr-0.5 w-[8px] h-[6px] pointer-events-none"><use href="#chev"/></svg>
                                </div>
                                <div class="mt-0.5 h-[15px] flex items-center justify-between pl-[2px]">
                                    <label for="solid" class="text-[#a5a5a5]">Solid Material Color</label>
                                    <span class="grid items-center">
                                        <select id="solid" disabled class="col-start-1 row-start-1 appearance-none w-[56px] h-[15px] border-[3px] border-r-[11px] border-[#c3c3c3] bg-[#f0f0f0]"></select>
                                        <svg class="col-start-1 row-start-1 justify-self-end mr-0.5 w-[7px] h-[5px] pointer-events-none" viewBox="0 0 7 5"><path d="M.5.5h6l-3 4z" fill="#777"/></svg>
                                    </span>
                                </div>
                            </div>
                            <svg class="w-[24px] h-[18px]"><use href="#ringslab"/></svg>
                            <fieldset class="pb-1">
                                <legend class="h-[16px] pt-[3px] text-[9px] leading-[13px] font-bold whitespace-nowrap">Machined Area Color ...</legend>
                                <label class="ml-[7px] h-[12px] flex items-center gap-[2px]"><input type="radio" name="fill" checked class="appearance-none size-[10px] rounded-full border border-[#333] checked:bg-[#222] checked:shadow-[inset_0_0_0_2px_#fff]">Material Color</label>
                                <label class="mt-1 ml-[7px] h-[12px] flex items-center gap-[2px]"><input type="radio" name="fill" class="appearance-none size-[10px] rounded-full border border-[#333] checked:bg-[#222] checked:shadow-[inset_0_0_0_2px_#fff]">Global Fill Color</label>
                                <span class="mt-[2px] ml-5 w-[62px] grid items-center">
                                    <select aria-label="Global fill color" disabled class="col-start-1 row-start-1 appearance-none w-[62px] h-[15px] border-[3px] border-r-[11px] border-[#c3c3c3] bg-[#f0f0f0]"></select>
                                    <svg class="col-start-1 row-start-1 justify-self-end mr-0.5 w-[7px] h-[5px] pointer-events-none" viewBox="0 0 7 5"><path d="M.5.5h6l-3 4z" fill="#777"/></svg>
                                </span>
                            </fieldset>
                            <svg class="w-[24px] h-[20px]" viewBox="0 0 24 18"><use href="#toolslab"/></svg>
                            <div>
                                <label class="h-[12px] flex items-center gap-[2px]"><span class="grid"><input type="checkbox" checked class="col-start-1 row-start-1 appearance-none size-[10px] border border-[#444]"><svg class="col-start-1 row-start-1 size-[10px] pointer-events-none"><use href="#tick"/></svg></span>Animate preview</label>
                                <label class="h-[12px] flex items-center gap-[2px]"><span class="grid"><input type="checkbox" checked class="col-start-1 row-start-1 appearance-none size-[10px] border border-[#444]"><svg class="col-start-1 row-start-1 size-[10px] pointer-events-none"><use href="#tick"/></svg></span>Draw tool</label>
                            </div>
                        </div>
                        <hr class="mt-px mb-1.5 border-[#aaa]">
                        <div class="h-[90px] flex flex-col justify-between">
                            <div class="h-[15px] grid grid-cols-[48px_1fr] items-center"><svg class="ml-[13px] w-[18px] h-[15px]" viewBox="0 0 24 18"><use href="#toolslab"/></svg><button type="button" class="h-[15px] border border-[#adadad] bg-[#e1e1e1]">Preview Toolpath</button></div>
                            <div class="h-[15px] grid grid-cols-[48px_1fr] items-center"><svg class="ml-[13px] w-[24px] h-[15px]" viewBox="0 0 32 20"><svg x="10" y="3" width="22" height="17" viewBox="0 0 24 18"><use href="#ringslab"/></svg><svg x="0" y="0" width="22" height="17" viewBox="0 0 24 18"><use href="#toolslab"/></svg></svg><button type="button" class="h-[15px] border border-[#adadad] bg-[#e1e1e1]">Preview All Toolpaths</button></div>
                            <div class="h-[15px] grid grid-cols-[48px_1fr] items-center"><svg class="ml-[13px] w-[20px] h-[15px]" viewBox="0 0 20 15"><path d="M2 2l14-1 3 11-14 2z" fill="#f7e6d8" stroke="#ead1bd" stroke-width=".7"/><ellipse cx="10.500" cy="7.500" rx="4.500" ry="4" fill="#d58c55"/></svg><button type="button" class="h-[15px] border border-[#adadad] bg-[#e1e1e1]">Delete Waste Material</button></div>
                            <div class="h-[15px] grid grid-cols-[48px_1fr] items-center"><svg class="ml-[13px] w-[18px] h-[15px]" viewBox="0 0 24 18"><use href="#slab"/></svg><button type="button" class="h-[15px] border border-[#adadad] bg-[#e1e1e1]">Reset Preview</button></div>
                            <div class="h-[15px] grid grid-cols-[48px_1fr] items-center"><svg class="ml-[13px] w-[20px] h-[15px]" viewBox="0 0 20 15"><svg x="4" y="1" width="16" height="14" viewBox="0 0 24 18"><use href="#ringslab"/></svg><svg x="0" y="0" width="11" height="11" viewBox="0 0 16 16"><use href="#floppy"/></svg></svg><button type="button" class="h-[15px] border border-[#adadad] bg-[#e1e1e1]">Save Preview Image</button></div>
                        </div>
                    </form>
                    <div class="mt-1 mr-1 flex justify-end">
                        <button class="w-[53px] h-[15px] border border-[#adadad] bg-[#e1e1e1] text-[8px] leading-[11px]">Close</button>
                    </div>
                </div>
            </div>
        </aside>
    </main>

    <!-- Status bar -->
    <footer class="h-[14px] shrink-0 flex items-center justify-between pl-px pr-[148px] bg-[#f0f0f0]">
        <span>Ready</span>
        <span>X: 2.9366 Y: 0.4818 Z: 0.0000</span>
    </footer>
</body>
</html>
